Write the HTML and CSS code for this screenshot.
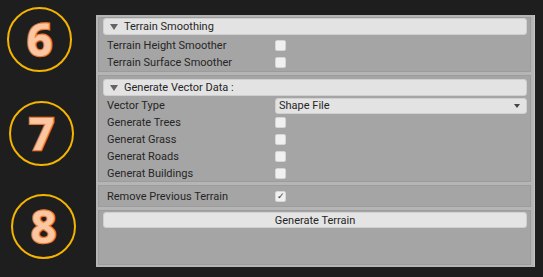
FILE: index.html
```html
<!DOCTYPE html>
<html lang="en">
<head>
  <meta charset="UTF-8">
  <title>Terrain Generator</title>
  <link rel="stylesheet" href="styles.css">
</head>
<body>
  <div class="marks">
    <div class="mark mark-6"><span>6</span></div>
    <div class="mark mark-7"><span>7</span></div>
    <div class="mark mark-8"><span>8</span></div>
  </div>

  <div class="panel">
    <div class="section smoothing">
      <div class="foldout"><i class="fold-arrow"></i>Terrain Smoothing</div>
      <div class="row">
        <label>Terrain Height Smoother</label>
        <span class="check"></span>
      </div>
      <div class="row">
        <label>Terrain Surface Smoother</label>
        <span class="check"></span>
      </div>
    </div>

    <div class="section vector">
      <div class="foldout"><i class="fold-arrow"></i>Generate Vector Data :</div>
      <div class="row">
        <label>Vector Type</label>
        <div class="dropdown">Shape File<i class="drop-arrow"></i></div>
      </div>
      <div class="row">
        <label>Generate Trees</label>
        <span class="check"></span>
      </div>
      <div class="row">
        <label>Generat Grass</label>
        <span class="check"></span>
      </div>
      <div class="row">
        <label>Generat Roads</label>
        <span class="check"></span>
      </div>
      <div class="row">
        <label>Generat Buildings</label>
        <span class="check"></span>
      </div>
    </div>

    <div class="section remove">
      <div class="row">
        <label>Remove Previous Terrain</label>
        <span class="check checked">&#10003;</span>
      </div>
    </div>

    <div class="section generate">
      <button class="btn">Generate Terrain</button>
    </div>
  </div>
</body>
</html>
```

FILE: styles.css
```css
* {
  margin: 0;
  padding: 0;
  box-sizing: border-box;
}

body {
  font-family: "Roboto", sans-serif;
  font-size: 11px;
  color: #262626;
  background-color: #1e1e1e;
  display: flex;
  height: 100vh;
  overflow: hidden;
}

/* numbered callouts */
.marks {
  width: 96px;
  flex-shrink: 0;
  display: flex;
  flex-direction: column;
}

.mark {
  width: 65px;
  height: 65px;
  border: 2px solid #f4b400;
  border-radius: 50%;
  display: flex;
  justify-content: center;
  align-items: center;
}

.mark span {
  font-family: "Open Sans", sans-serif;
  font-weight: 700;
  font-size: 45px;
  line-height: 1;
  color: #fbc6a2;
  -webkit-text-stroke: 2.5px #ea7a33;
  paint-order: stroke fill;
  margin-top: -2px;
}

.mark-6 {
  margin: 7px 0 0 7px;
}

.mark-7 {
  margin: 29px 0 0 9px;
}

.mark-8 {
  margin: 28px 0 0 11px;
}

/* inspector panel */
.panel {
  margin-top: 15px;
  width: 439px;
  height: 252px;
  background-color: #b5b5b5;
  padding: 2px 4px 2px 2px;
  display: flex;
  flex-direction: column;
  gap: 3px;
  box-shadow: inset -1px 0 0 #c4c4c4;
}

.section {
  background-color: #a5a5a5;
  border: 1px solid #9c9c9c;
  padding: 0 3px 0 4px;
}

.smoothing {
  height: 55px;
}

.vector {
  padding-top: 3px;
  height: 107px;
}

.remove {
  padding-top: 2px;
  height: 22px;
}

.generate {
  flex: 1;
  padding-top: 1px;
}

.foldout {
  height: 17px;
  background-color: #e3e3e3;
  border: 1px solid #cfcfcf;
  border-radius: 3px;
  display: flex;
  align-items: center;
  padding-left: 6px;
  margin-bottom: 2px;
}

.fold-arrow {
  width: 0;
  height: 0;
  border-left: 4px solid transparent;
  border-right: 4px solid transparent;
  border-top: 6px solid #646464;
  margin-right: 6px;
}

.vector .foldout {
  margin-bottom: 1px;
}

.row {
  height: 17px;
  display: flex;
  align-items: center;
  padding-left: 4px;
}

.row label {
  width: 168px;
  flex-shrink: 0;
}

.check {
  width: 11px;
  height: 11px;
  background-color: #f0f0f0;
  border: 1px solid #d6d6d6;
  border-radius: 2px;
  display: flex;
  justify-content: center;
  align-items: center;
  font-size: 9px;
  line-height: 1;
  color: #333;
}

.dropdown {
  flex: 1;
  height: 16px;
  background-color: #e3e3e3;
  border: 1px solid #d0d0d0;
  border-radius: 3px;
  display: flex;
  align-items: center;
  justify-content: space-between;
  padding: 0 6px 0 3px;
}

.drop-arrow {
  width: 0;
  height: 0;
  border-left: 3px solid transparent;
  border-right: 3px solid transparent;
  border-top: 4px solid #444;
}

.btn {
  width: 100%;
  height: 16px;
  font-family: inherit;
  font-size: 11px;
  color: #262626;
  background-color: #e4e4e4;
  border: 1px solid #cfcfcf;
  border-radius: 3px;
}
```
